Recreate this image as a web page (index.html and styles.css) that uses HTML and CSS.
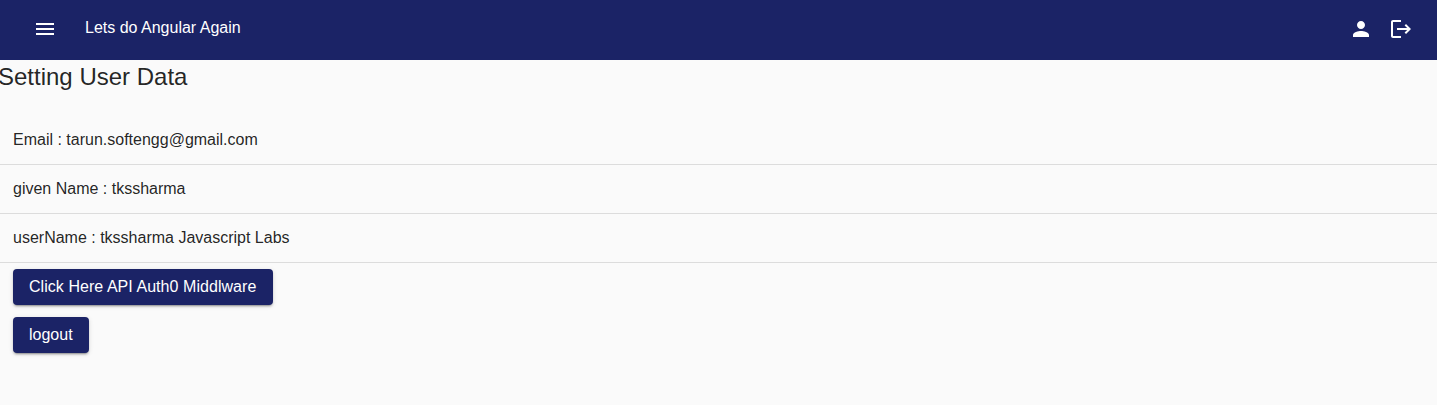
FILE: index.html
```html
<!DOCTYPE html>
<html lang="en">
<head>
<meta charset="utf-8">
<title>Lets do Angular Again</title>
<link rel="stylesheet" href="styles.css">
</head>
<body>
<header class="toolbar">
  <svg class="icon menu" viewBox="0 0 24 24"><path d="M3 18h18v-2H3v2zm0-5h18v-2H3v2zm0-7v2h18V6H3z"/></svg>
  <span class="brand">Lets do Angular Again</span>
  <svg class="icon person" viewBox="0 0 24 24"><path d="M12 12c2.21 0 4-1.79 4-4s-1.79-4-4-4-4 1.79-4 4 1.79 4 4 4zm0 2c-2.67 0-8 1.34-8 4v2h16v-2c0-2.660-5.330-4-8-4z"/></svg>
  <svg class="icon exit" viewBox="0 0 24 24"><path d="M17 7l-1.410 1.410L18.170 11H8v2h10.170l-2.580 2.580L17 17l5-5-5-5zM4 5h8V3H4c-1.100 0-2 .9-2 2v14c0 1.100.9 2 2 2h8v-2H4V5z"/></svg>
</header>
<main>
  <h1 class="title">Setting User Data</h1>
  <ul class="list">
    <li class="row">Email : tarun.softengg@gmail.com</li>
    <li class="row">given Name : tkssharma</li>
    <li class="row">userName : tkssharma Javascript Labs</li>
  </ul>
  <div class="actions">
    <button class="button wide">Click Here API Auth0 Middlware</button>
    <button class="button small">logout</button>
  </div>
</main>
</body>
</html>
```
FILE: styles.css
```css
* { box-sizing: border-box; }
body { margin: 0; background: #fafafa; color: rgba(0,0,0,.87); font: 16px/24px "Liberation Sans", Arial, sans-serif; overflow: hidden; }
.toolbar { height: 60px; background: #1b2366; color: #fff; display: flex; align-items: center; padding: 0 24px 2px 33px; }
.icon { width: 24px; height: 24px; fill: currentColor; flex: none; }
.brand { margin: 0 auto 2px 28px; }
.person { margin-right: 16px; }
.title { margin: 0; padding-top: 1px; height: 56px; font-size: 24px; line-height: 32px; font-weight: 400; margin-left: -2px; }
.list { list-style: none; margin: 0; padding: 0; }
.row { height: 49px; padding: 0 13px; line-height: 48px; border-bottom: 1px solid #dcdcdc; }
.actions { display: flex; flex-direction: column; align-items: flex-start; gap: 12px; padding: 6px 13px; }
.button { height: 36px; border: 0; border-radius: 4px; padding: 0 0 0 16px; text-align: left; white-space: nowrap; background: #1b2366; color: #fff; font: inherit; line-height: 36px; box-shadow: 0 3px 1px -2px rgba(0,0,0,.2), 0 2px 2px rgba(0,0,0,.14), 0 1px 5px rgba(0,0,0,.12); }
.wide { width: 260px; letter-spacing: .05px; }
.small { width: 76px; }
```
